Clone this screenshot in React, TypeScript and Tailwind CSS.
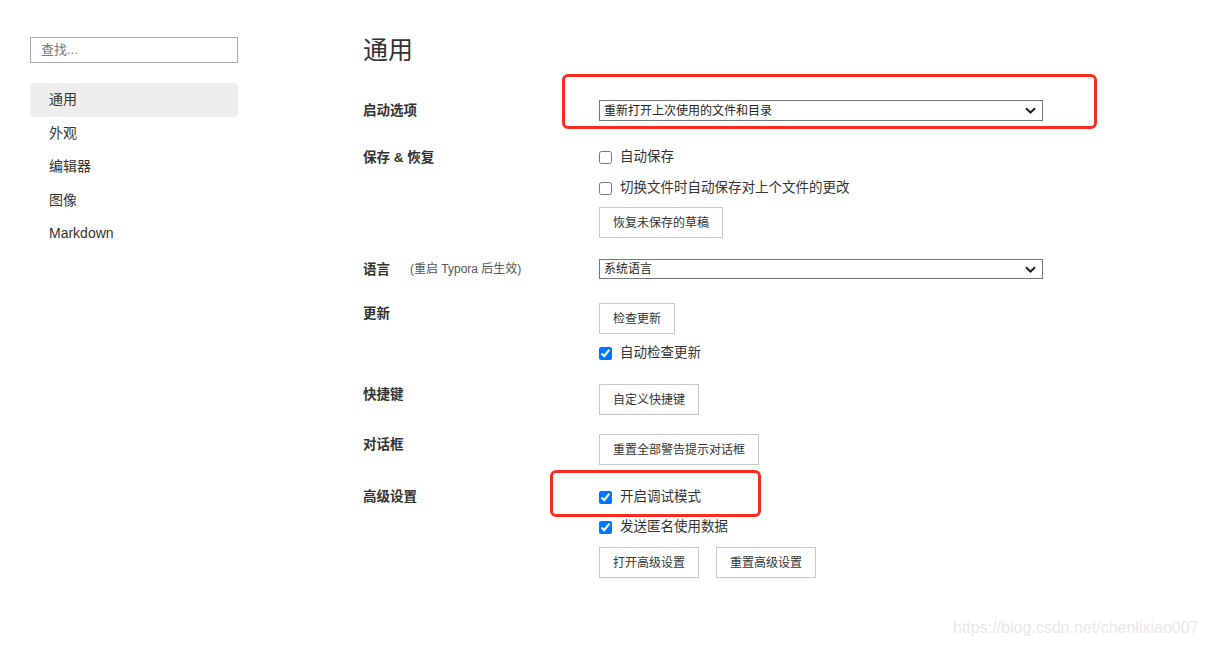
import React from "react";

const FONT = '"Liberation Sans", "Noto Sans CJK SC", sans-serif';

function Chevron() {
  return (
    <svg width="11" height="7" viewBox="0 0 11 7" className="shrink-0">
      <path d="M1 1.2 L5.5 5.5 L10 1.2" fill="none" stroke="#222" strokeWidth="2" />
    </svg>
  );
}

function Select({ value, h }: { value: string; h: string }) {
  return (
    <div
      className={`flex w-[444px] ${h} items-center justify-between border border-[#767676] bg-white pl-[4px] pr-[6px] text-[12px] text-[#222]`}
    >
      <span>{value}</span>
      <Chevron />
    </div>
  );
}

function Check({ label, checked }: { label: string; checked?: boolean }) {
  return (
    <label className="flex h-[21px] items-center text-[13.5px] text-[#333]">
      <input
        type="checkbox"
        defaultChecked={checked}
        className="m-0 h-[13px] w-[13px] accent-[#0075ff]"
      />
      <span className="ml-[8px]">{label}</span>
    </label>
  );
}

function Btn({ children }: { children: React.ReactNode }) {
  return (
    <button className="h-[31px] border border-[#c8c8c8] bg-white px-[13px] text-[12px] text-[#333]">
      {children}
    </button>
  );
}

function Row({
  label,
  extra,
  mt,
  labelShift,
  children,
}: {
  label: string;
  extra?: string;
  mt: string;
  labelShift?: string;
  children: React.ReactNode;
}) {
  return (
    <div className={`flex ${mt}`}>
      <div className={`flex w-[236px] shrink-0 items-start leading-[21px] ${labelShift ?? ""}`}>
        <span className="text-[13.5px] font-bold text-[#333]">{label}</span>
        {extra && <span className="ml-[20px] text-[12px] text-[#555]">{extra}</span>}
      </div>
      <div className="flex flex-col items-start">{children}</div>
    </div>
  );
}

export default function App() {
  const nav = ["通用", "外观", "编辑器", "图像", "Markdown"];
  return (
    <div className="relative h-[646px] w-full overflow-hidden bg-white" style={{ fontFamily: FONT }}>
      <div className="flex">
        {/* Sidebar */}
        <aside className="ml-[30px] mt-[37px] w-[208px] shrink-0">
          <div className="flex h-[26px] items-center border border-[#a9a9a9] pl-[10px] text-[13px] text-[#777]">
            查找...
          </div>
          <nav className="mt-[20px] flex flex-col">
            {nav.map((n, i) => (
              <div
                key={n}
                className={`flex h-[33.5px] items-center rounded-[4px] pl-[19px] text-[14px] text-[#333] ${
                  i === 0 ? "bg-[#eeeeee]" : ""
                }`}
              >
                {n}
              </div>
            ))}
          </nav>
        </aside>

        {/* Main */}
        <main className="ml-[125px] flex flex-col">
          <h1 className="mt-[35px] text-[25px] font-normal leading-[30px] text-[#333]">通用</h1>

          <Row label="启动选项" mt="mt-[35px]">
            <Select value="重新打开上次使用的文件和目录" h="h-[21px]" />
          </Row>

          <Row label="保存 & 恢复" mt="mt-[26px]">
            <Check label="自动保存" />
            <div className="mt-[10px]">
              <Check label="切换文件时自动保存对上个文件的更改" />
            </div>
            <div className="mt-[8px]">
              <Btn>恢复未保存的草稿</Btn>
            </div>
          </Row>

          <Row label="语言" extra="(重启 Typora 后生效)" mt="mt-[21px]">
            <Select value="系统语言" h="h-[20px]" />
          </Row>

          <Row label="更新" mt="mt-[23px]">
            <Btn>检查更新</Btn>
            <div className="mt-[9px]">
              <Check label="自动检查更新" checked />
            </div>
          </Row>

          <Row label="快捷键" mt="mt-[20px]">
            <Btn>自定义快捷键</Btn>
          </Row>

          <Row label="对话框" mt="mt-[19px]">
            <Btn>重置全部警告提示对话框</Btn>
          </Row>

          <Row label="高级设置" mt="mt-[22px]" labelShift="-mt-[1px]">
            <Check label="开启调试模式" checked />
            <div className="mt-[9px]">
              <Check label="发送匿名使用数据" checked />
            </div>
            <div className="mt-[9px] flex gap-[17px]">
              <Btn>打开高级设置</Btn>
              <Btn>重置高级设置</Btn>
            </div>
          </Row>
        </main>
      </div>

      {/* Annotation boxes */}
      <div className="pointer-events-none absolute left-[562px] top-[74px] h-[55px] w-[535px] rounded-[6px] border-[3px] border-[#ff2a1f]" />
      <div className="pointer-events-none absolute left-[550px] top-[470px] h-[47px] w-[211px] rounded-[6px] border-[3px] border-[#ff2a1f]" />

      {/* Watermark */}
      <div className="pointer-events-none absolute left-[953px] top-[617px] text-[16px] leading-[22px] text-[#e8e8e8]">
        https://blog.csdn.net/chenlixiao007
      </div>
    </div>
  );
}
